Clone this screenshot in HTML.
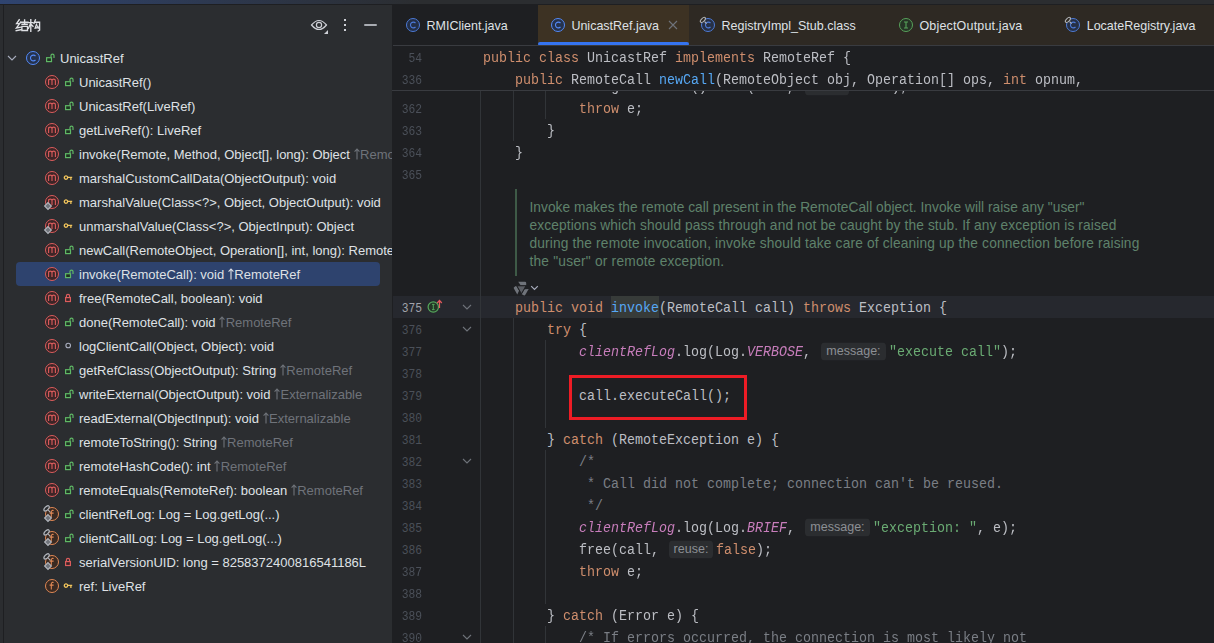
<!DOCTYPE html>
<html><head><meta charset="utf-8"><style>
*{margin:0;padding:0;box-sizing:content-box}
html,body{width:1214px;height:643px;overflow:hidden;background:#1E1F22}
body{position:relative;font-family:"Liberation Sans",sans-serif}
.box{position:absolute}
.ic{position:absolute;overflow:visible}
#title{position:absolute;left:0;top:0;width:1214px;height:4px;background:linear-gradient(90deg,#2F4470 0px,#2B2D30 420px)}
#tline{position:absolute;left:0;top:4px;width:1214px;height:1px;background:#1E1F22}
#panel{position:absolute;left:4px;top:5px;width:388px;height:638px;background:#2B2D30;overflow:hidden}
#lstrip{position:absolute;left:0;top:5px;width:3px;height:638px;background:#2B2D30}
#lline{position:absolute;left:3px;top:5px;width:1px;height:638px;background:#1E1F22}
#pin{position:absolute;left:-4px;top:-5px;width:392px;height:643px}
.ptitle{position:absolute;left:16px;top:17px;font-size:13px;font-weight:bold;color:#DFE1E5}
.tl{position:absolute;height:22px;line-height:22px;font-size:13px;color:#DFE1E5;white-space:pre}
.suf{color:#6F737A}
.tab{position:absolute;top:15px;transform-origin:0 15px;transform:scaleY(1.08);height:22px;line-height:22px;font-size:12.5px;color:#DFE1E5;white-space:pre}
.cl{position:absolute;height:22px;line-height:22px;margin-top:2px;transform-origin:0 14px;transform:scaleY(1.14);font-family:"Liberation Mono",monospace;font-size:13.333px;color:#BCBEC4;white-space:pre}
.k{color:#CF8E6D} .f{color:#56A8F5} .g{color:#6AAB73} .c{color:#7A7E85} .s{color:#C77DBB;font-style:italic}
.lnum{position:absolute;left:392px;width:30px;text-align:right;height:22px;line-height:22px;margin-top:2px;transform-origin:0 14px;transform:scaleY(1.18);font-family:"Liberation Mono",monospace;font-size:11.3px;color:#4B5059}
.hint{display:inline-block;box-sizing:border-box;margin:0 3px 0 2px;height:18px;line-height:18px;vertical-align:0px;transform:scaleY(0.877);background:#2B2D30;border-radius:4px;font-family:"Liberation Sans",sans-serif;font-size:12.5px;color:#8C8F94;text-align:center}
.doc{position:absolute;left:529.5px;height:18px;line-height:18px;font-size:13.75px;color:#5F826B;white-space:pre}
</style></head><body>
<div id="title"></div><div id="tline"></div>
<div id="lstrip"></div><div id="lline"></div>
<div id="panel"><div id="pin">
<svg class="ic" style="left:0;top:0" width="50" height="40" viewBox="0 0 50 40"><g fill="none" stroke="#DFE1E5" stroke-width="1.35" stroke-linecap="square"><path d="M19.2 19.8 L16.6 23.6 L19.8 23.4 M20.6 22.2 L16.4 28 L21 27.2 M16.2 30.6 L21.2 29.6"/><path d="M21.2 22.2 H28 M24.6 19.8 V24.2 M22 24.2 H27.2 M21.9 26.3 H27.5 V30.5 H21.9 Z"/><path d="M28.4 22.6 H33 M30.8 19.7 V31.2 M30.6 23.4 L28.4 28.4 M31.2 24.4 L33 26.2"/><path d="M35.4 19.8 L34 23.4 M34.8 22.2 H39.6 V30.2 L38.2 31 M36.6 24.2 L35.2 28.2 L38.2 27.6 M37.6 26.2 L38.4 28"/></g></svg>
<svg class="ic" style="left:309px;top:17px" width="22" height="18" viewBox="0 0 22 18"><path d="M2.5 8 Q10 -1 17.5 8 Q10 17 2.5 8 Z" fill="none" stroke="#CED0D6" stroke-width="1.2"/><circle cx="10" cy="8" r="2.6" fill="none" stroke="#CED0D6" stroke-width="1.2"/><path d="M19 13 L19 17 L15 17 Z" fill="#CED0D6"/></svg>
<div class="box" style="left:344px;top:19px;width:2px;height:2px;background:#CED0D6"></div>
<div class="box" style="left:344px;top:24px;width:2px;height:2px;background:#CED0D6"></div>
<div class="box" style="left:344px;top:29px;width:2px;height:2px;background:#CED0D6"></div>
<div class="box" style="left:364px;top:24px;width:13px;height:2px;background:#A9ACB2;border-radius:1px"></div>
<svg class="ic" style="left:7px;top:54px" width="10" height="8" viewBox="0 0 10 8"><path d="M1 2 L5 6 L9 2" fill="none" stroke="#A8ADBD" stroke-width="1.1"/></svg>
<svg class="ic" style="left:25px;top:50px" width="16" height="16" viewBox="0 0 16 16"><circle cx="8" cy="8" r="6.5" fill="#25324D" stroke="#548AF7" stroke-width="1"/><path d="M10.5 6 A2.9 2.9 0 1 0 10.5 10" fill="none" stroke="#548AF7" stroke-width="1.1"/></svg>
<svg class="ic" style="left:45px;top:53px" width="10" height="10" viewBox="0 0 10 10"><rect x="1.6" y="4.7" width="4.9" height="3.9" fill="#1F3322" stroke="#5FB865" stroke-width="1.2"/><path d="M6 4.2 V2.6 Q6 1.1 7.5 1.1 Q9 1.1 9 2.6 V5" fill="none" stroke="#5FB865" stroke-width="1.2"/></svg>
<div class="tl" style="left:60px;top:48px">UnicastRef</div>
<div class="box" style="left:16px;top:262px;width:364px;height:24px;background:#2E436E;border-radius:4px"></div>
<svg class="ic" style="left:44px;top:74px" width="16" height="16" viewBox="0 0 16 16"><circle cx="8" cy="8" r="6.5" fill="#3D2527" stroke="#DB5C5C" stroke-width="1"/><path d="M4.6 11 V5.2 M4.6 6.8 Q4.6 5.1 6.3 5.1 Q8 5.1 8 6.8 V11 M8 6.8 Q8 5.1 9.7 5.1 Q11.4 5.1 11.4 6.8 V11" fill="none" stroke="#DB5C5C" stroke-width="1.1"/></svg>
<svg class="ic" style="left:64px;top:77px" width="10" height="10" viewBox="0 0 10 10"><rect x="1.6" y="4.7" width="4.9" height="3.9" fill="#1F3322" stroke="#5FB865" stroke-width="1.2"/><path d="M6 4.2 V2.6 Q6 1.1 7.5 1.1 Q9 1.1 9 2.6 V5" fill="none" stroke="#5FB865" stroke-width="1.2"/></svg>
<div class="tl" style="left:79px;top:72px">UnicastRef()</div>
<svg class="ic" style="left:44px;top:98px" width="16" height="16" viewBox="0 0 16 16"><circle cx="8" cy="8" r="6.5" fill="#3D2527" stroke="#DB5C5C" stroke-width="1"/><path d="M4.6 11 V5.2 M4.6 6.8 Q4.6 5.1 6.3 5.1 Q8 5.1 8 6.8 V11 M8 6.8 Q8 5.1 9.7 5.1 Q11.4 5.1 11.4 6.8 V11" fill="none" stroke="#DB5C5C" stroke-width="1.1"/></svg>
<svg class="ic" style="left:64px;top:101px" width="10" height="10" viewBox="0 0 10 10"><rect x="1.6" y="4.7" width="4.9" height="3.9" fill="#1F3322" stroke="#5FB865" stroke-width="1.2"/><path d="M6 4.2 V2.6 Q6 1.1 7.5 1.1 Q9 1.1 9 2.6 V5" fill="none" stroke="#5FB865" stroke-width="1.2"/></svg>
<div class="tl" style="left:79px;top:96px">UnicastRef(LiveRef)</div>
<svg class="ic" style="left:44px;top:122px" width="16" height="16" viewBox="0 0 16 16"><circle cx="8" cy="8" r="6.5" fill="#3D2527" stroke="#DB5C5C" stroke-width="1"/><path d="M4.6 11 V5.2 M4.6 6.8 Q4.6 5.1 6.3 5.1 Q8 5.1 8 6.8 V11 M8 6.8 Q8 5.1 9.7 5.1 Q11.4 5.1 11.4 6.8 V11" fill="none" stroke="#DB5C5C" stroke-width="1.1"/></svg>
<svg class="ic" style="left:64px;top:125px" width="10" height="10" viewBox="0 0 10 10"><rect x="1.6" y="4.7" width="4.9" height="3.9" fill="#1F3322" stroke="#5FB865" stroke-width="1.2"/><path d="M6 4.2 V2.6 Q6 1.1 7.5 1.1 Q9 1.1 9 2.6 V5" fill="none" stroke="#5FB865" stroke-width="1.2"/></svg>
<div class="tl" style="left:79px;top:120px">getLiveRef(): LiveRef</div>
<svg class="ic" style="left:44px;top:146px" width="16" height="16" viewBox="0 0 16 16"><circle cx="8" cy="8" r="6.5" fill="#3D2527" stroke="#DB5C5C" stroke-width="1"/><path d="M4.6 11 V5.2 M4.6 6.8 Q4.6 5.1 6.3 5.1 Q8 5.1 8 6.8 V11 M8 6.8 Q8 5.1 9.7 5.1 Q11.4 5.1 11.4 6.8 V11" fill="none" stroke="#DB5C5C" stroke-width="1.1"/></svg>
<svg class="ic" style="left:64px;top:149px" width="10" height="10" viewBox="0 0 10 10"><rect x="1.6" y="4.7" width="4.9" height="3.9" fill="#1F3322" stroke="#5FB865" stroke-width="1.2"/><path d="M6 4.2 V2.6 Q6 1.1 7.5 1.1 Q9 1.1 9 2.6 V5" fill="none" stroke="#5FB865" stroke-width="1.2"/></svg>
<div class="tl" style="left:79px;top:144px">invoke(Remote, Method, Object[], long): Object <span class="suf"><svg width="6" height="12" viewBox="0 0 6 12" style="vertical-align:-1px;margin-right:0.5px"><path d="M3 11.5 V1 M0.6 3.6 L3 1 L5.4 3.6" fill="none" stroke="#6F737A" stroke-width="1.1"/></svg>RemoteRef</span></div>
<svg class="ic" style="left:44px;top:170px" width="16" height="16" viewBox="0 0 16 16"><circle cx="8" cy="8" r="6.5" fill="#3D2527" stroke="#DB5C5C" stroke-width="1"/><path d="M4.6 11 V5.2 M4.6 6.8 Q4.6 5.1 6.3 5.1 Q8 5.1 8 6.8 V11 M8 6.8 Q8 5.1 9.7 5.1 Q11.4 5.1 11.4 6.8 V11" fill="none" stroke="#DB5C5C" stroke-width="1.1"/></svg>
<svg class="ic" style="left:64px;top:173px" width="10" height="10" viewBox="0 0 10 10"><circle cx="2.0" cy="4.6" r="1.7" fill="none" stroke="#F2C55C" stroke-width="1.3"/><path d="M3.8 4.4 H8.2 M6.9 4.4 V6.9" fill="none" stroke="#F2C55C" stroke-width="1.3"/></svg>
<div class="tl" style="left:79px;top:168px">marshalCustomCallData(ObjectOutput): void</div>
<svg class="ic" style="left:44px;top:194px" width="16" height="16" viewBox="0 0 16 16"><circle cx="8" cy="8" r="6.5" fill="#3D2527" stroke="#DB5C5C" stroke-width="1"/><path d="M4.6 11 V5.2 M4.6 6.8 Q4.6 5.1 6.3 5.1 Q8 5.1 8 6.8 V11 M8 6.8 Q8 5.1 9.7 5.1 Q11.4 5.1 11.4 6.8 V11" fill="none" stroke="#DB5C5C" stroke-width="1.1"/></svg>
<svg class="ic" style="left:43px;top:201px" width="10" height="10" viewBox="0 0 10 10"><path d="M5 1.6 L8.4 5 L5 8.4 L1.6 5 Z" fill="#6F737A" stroke="#B4B8BF" stroke-width="1.1"/></svg>
<svg class="ic" style="left:64px;top:197px" width="10" height="10" viewBox="0 0 10 10"><circle cx="2.0" cy="4.6" r="1.7" fill="none" stroke="#F2C55C" stroke-width="1.3"/><path d="M3.8 4.4 H8.2 M6.9 4.4 V6.9" fill="none" stroke="#F2C55C" stroke-width="1.3"/></svg>
<div class="tl" style="left:79px;top:192px">marshalValue(Class&lt;?&gt;, Object, ObjectOutput): void</div>
<svg class="ic" style="left:44px;top:218px" width="16" height="16" viewBox="0 0 16 16"><circle cx="8" cy="8" r="6.5" fill="#3D2527" stroke="#DB5C5C" stroke-width="1"/><path d="M4.6 11 V5.2 M4.6 6.8 Q4.6 5.1 6.3 5.1 Q8 5.1 8 6.8 V11 M8 6.8 Q8 5.1 9.7 5.1 Q11.4 5.1 11.4 6.8 V11" fill="none" stroke="#DB5C5C" stroke-width="1.1"/></svg>
<svg class="ic" style="left:43px;top:225px" width="10" height="10" viewBox="0 0 10 10"><path d="M5 1.6 L8.4 5 L5 8.4 L1.6 5 Z" fill="#6F737A" stroke="#B4B8BF" stroke-width="1.1"/></svg>
<svg class="ic" style="left:64px;top:221px" width="10" height="10" viewBox="0 0 10 10"><circle cx="2.0" cy="4.6" r="1.7" fill="none" stroke="#F2C55C" stroke-width="1.3"/><path d="M3.8 4.4 H8.2 M6.9 4.4 V6.9" fill="none" stroke="#F2C55C" stroke-width="1.3"/></svg>
<div class="tl" style="left:79px;top:216px">unmarshalValue(Class&lt;?&gt;, ObjectInput): Object</div>
<svg class="ic" style="left:44px;top:242px" width="16" height="16" viewBox="0 0 16 16"><circle cx="8" cy="8" r="6.5" fill="#3D2527" stroke="#DB5C5C" stroke-width="1"/><path d="M4.6 11 V5.2 M4.6 6.8 Q4.6 5.1 6.3 5.1 Q8 5.1 8 6.8 V11 M8 6.8 Q8 5.1 9.7 5.1 Q11.4 5.1 11.4 6.8 V11" fill="none" stroke="#DB5C5C" stroke-width="1.1"/></svg>
<svg class="ic" style="left:64px;top:245px" width="10" height="10" viewBox="0 0 10 10"><rect x="1.6" y="4.7" width="4.9" height="3.9" fill="#1F3322" stroke="#5FB865" stroke-width="1.2"/><path d="M6 4.2 V2.6 Q6 1.1 7.5 1.1 Q9 1.1 9 2.6 V5" fill="none" stroke="#5FB865" stroke-width="1.2"/></svg>
<div class="tl" style="left:79px;top:240px">newCall(RemoteObject, Operation[], int, long): RemoteCall</div>
<svg class="ic" style="left:44px;top:266px" width="16" height="16" viewBox="0 0 16 16"><circle cx="8" cy="8" r="6.5" fill="#3D2527" stroke="#DB5C5C" stroke-width="1"/><path d="M4.6 11 V5.2 M4.6 6.8 Q4.6 5.1 6.3 5.1 Q8 5.1 8 6.8 V11 M8 6.8 Q8 5.1 9.7 5.1 Q11.4 5.1 11.4 6.8 V11" fill="none" stroke="#DB5C5C" stroke-width="1.1"/></svg>
<svg class="ic" style="left:64px;top:269px" width="10" height="10" viewBox="0 0 10 10"><rect x="1.6" y="4.7" width="4.9" height="3.9" fill="#1F3322" stroke="#5FB865" stroke-width="1.2"/><path d="M6 4.2 V2.6 Q6 1.1 7.5 1.1 Q9 1.1 9 2.6 V5" fill="none" stroke="#5FB865" stroke-width="1.2"/></svg>
<div class="tl" style="left:79px;top:264px">invoke(RemoteCall): void <span class="suf" style="color:#DFE1E5"><svg width="6" height="12" viewBox="0 0 6 12" style="vertical-align:-1px;margin-right:0.5px"><path d="M3 11.5 V1 M0.6 3.6 L3 1 L5.4 3.6" fill="none" stroke="#DFE1E5" stroke-width="1.1"/></svg>RemoteRef</span></div>
<svg class="ic" style="left:44px;top:290px" width="16" height="16" viewBox="0 0 16 16"><circle cx="8" cy="8" r="6.5" fill="#3D2527" stroke="#DB5C5C" stroke-width="1"/><path d="M4.6 11 V5.2 M4.6 6.8 Q4.6 5.1 6.3 5.1 Q8 5.1 8 6.8 V11 M8 6.8 Q8 5.1 9.7 5.1 Q11.4 5.1 11.4 6.8 V11" fill="none" stroke="#DB5C5C" stroke-width="1.1"/></svg>
<svg class="ic" style="left:64px;top:293px" width="10" height="10" viewBox="0 0 10 10"><rect x="1.6" y="4.6" width="4.8" height="3.9" fill="#3A2426" stroke="#DB5C5C" stroke-width="1.2"/><path d="M2.4 4.6 V3.1 Q2.4 1.4 4 1.4 Q5.6 1.4 5.6 3.1 V4.6" fill="none" stroke="#DB5C5C" stroke-width="1.2"/></svg>
<div class="tl" style="left:79px;top:288px">free(RemoteCall, boolean): void</div>
<svg class="ic" style="left:44px;top:314px" width="16" height="16" viewBox="0 0 16 16"><circle cx="8" cy="8" r="6.5" fill="#3D2527" stroke="#DB5C5C" stroke-width="1"/><path d="M4.6 11 V5.2 M4.6 6.8 Q4.6 5.1 6.3 5.1 Q8 5.1 8 6.8 V11 M8 6.8 Q8 5.1 9.7 5.1 Q11.4 5.1 11.4 6.8 V11" fill="none" stroke="#DB5C5C" stroke-width="1.1"/></svg>
<svg class="ic" style="left:64px;top:317px" width="10" height="10" viewBox="0 0 10 10"><rect x="1.6" y="4.7" width="4.9" height="3.9" fill="#1F3322" stroke="#5FB865" stroke-width="1.2"/><path d="M6 4.2 V2.6 Q6 1.1 7.5 1.1 Q9 1.1 9 2.6 V5" fill="none" stroke="#5FB865" stroke-width="1.2"/></svg>
<div class="tl" style="left:79px;top:312px">done(RemoteCall): void <span class="suf"><svg width="6" height="12" viewBox="0 0 6 12" style="vertical-align:-1px;margin-right:0.5px"><path d="M3 11.5 V1 M0.6 3.6 L3 1 L5.4 3.6" fill="none" stroke="#6F737A" stroke-width="1.1"/></svg>RemoteRef</span></div>
<svg class="ic" style="left:44px;top:338px" width="16" height="16" viewBox="0 0 16 16"><circle cx="8" cy="8" r="6.5" fill="#3D2527" stroke="#DB5C5C" stroke-width="1"/><path d="M4.6 11 V5.2 M4.6 6.8 Q4.6 5.1 6.3 5.1 Q8 5.1 8 6.8 V11 M8 6.8 Q8 5.1 9.7 5.1 Q11.4 5.1 11.4 6.8 V11" fill="none" stroke="#DB5C5C" stroke-width="1.1"/></svg>
<svg class="ic" style="left:64px;top:341px" width="10" height="10" viewBox="0 0 10 10"><circle cx="4.2" cy="4.5" r="2.3" fill="none" stroke="#A8ADBD" stroke-width="1.1"/></svg>
<div class="tl" style="left:79px;top:336px">logClientCall(Object, Object): void</div>
<svg class="ic" style="left:44px;top:362px" width="16" height="16" viewBox="0 0 16 16"><circle cx="8" cy="8" r="6.5" fill="#3D2527" stroke="#DB5C5C" stroke-width="1"/><path d="M4.6 11 V5.2 M4.6 6.8 Q4.6 5.1 6.3 5.1 Q8 5.1 8 6.8 V11 M8 6.8 Q8 5.1 9.7 5.1 Q11.4 5.1 11.4 6.8 V11" fill="none" stroke="#DB5C5C" stroke-width="1.1"/></svg>
<svg class="ic" style="left:64px;top:365px" width="10" height="10" viewBox="0 0 10 10"><rect x="1.6" y="4.7" width="4.9" height="3.9" fill="#1F3322" stroke="#5FB865" stroke-width="1.2"/><path d="M6 4.2 V2.6 Q6 1.1 7.5 1.1 Q9 1.1 9 2.6 V5" fill="none" stroke="#5FB865" stroke-width="1.2"/></svg>
<div class="tl" style="left:79px;top:360px">getRefClass(ObjectOutput): String <span class="suf"><svg width="6" height="12" viewBox="0 0 6 12" style="vertical-align:-1px;margin-right:0.5px"><path d="M3 11.5 V1 M0.6 3.6 L3 1 L5.4 3.6" fill="none" stroke="#6F737A" stroke-width="1.1"/></svg>RemoteRef</span></div>
<svg class="ic" style="left:44px;top:386px" width="16" height="16" viewBox="0 0 16 16"><circle cx="8" cy="8" r="6.5" fill="#3D2527" stroke="#DB5C5C" stroke-width="1"/><path d="M4.6 11 V5.2 M4.6 6.8 Q4.6 5.1 6.3 5.1 Q8 5.1 8 6.8 V11 M8 6.8 Q8 5.1 9.7 5.1 Q11.4 5.1 11.4 6.8 V11" fill="none" stroke="#DB5C5C" stroke-width="1.1"/></svg>
<svg class="ic" style="left:64px;top:389px" width="10" height="10" viewBox="0 0 10 10"><rect x="1.6" y="4.7" width="4.9" height="3.9" fill="#1F3322" stroke="#5FB865" stroke-width="1.2"/><path d="M6 4.2 V2.6 Q6 1.1 7.5 1.1 Q9 1.1 9 2.6 V5" fill="none" stroke="#5FB865" stroke-width="1.2"/></svg>
<div class="tl" style="left:79px;top:384px">writeExternal(ObjectOutput): void <span class="suf"><svg width="6" height="12" viewBox="0 0 6 12" style="vertical-align:-1px;margin-right:0.5px"><path d="M3 11.5 V1 M0.6 3.6 L3 1 L5.4 3.6" fill="none" stroke="#6F737A" stroke-width="1.1"/></svg>Externalizable</span></div>
<svg class="ic" style="left:44px;top:410px" width="16" height="16" viewBox="0 0 16 16"><circle cx="8" cy="8" r="6.5" fill="#3D2527" stroke="#DB5C5C" stroke-width="1"/><path d="M4.6 11 V5.2 M4.6 6.8 Q4.6 5.1 6.3 5.1 Q8 5.1 8 6.8 V11 M8 6.8 Q8 5.1 9.7 5.1 Q11.4 5.1 11.4 6.8 V11" fill="none" stroke="#DB5C5C" stroke-width="1.1"/></svg>
<svg class="ic" style="left:64px;top:413px" width="10" height="10" viewBox="0 0 10 10"><rect x="1.6" y="4.7" width="4.9" height="3.9" fill="#1F3322" stroke="#5FB865" stroke-width="1.2"/><path d="M6 4.2 V2.6 Q6 1.1 7.5 1.1 Q9 1.1 9 2.6 V5" fill="none" stroke="#5FB865" stroke-width="1.2"/></svg>
<div class="tl" style="left:79px;top:408px">readExternal(ObjectInput): void <span class="suf"><svg width="6" height="12" viewBox="0 0 6 12" style="vertical-align:-1px;margin-right:0.5px"><path d="M3 11.5 V1 M0.6 3.6 L3 1 L5.4 3.6" fill="none" stroke="#6F737A" stroke-width="1.1"/></svg>Externalizable</span></div>
<svg class="ic" style="left:44px;top:434px" width="16" height="16" viewBox="0 0 16 16"><circle cx="8" cy="8" r="6.5" fill="#3D2527" stroke="#DB5C5C" stroke-width="1"/><path d="M4.6 11 V5.2 M4.6 6.8 Q4.6 5.1 6.3 5.1 Q8 5.1 8 6.8 V11 M8 6.8 Q8 5.1 9.7 5.1 Q11.4 5.1 11.4 6.8 V11" fill="none" stroke="#DB5C5C" stroke-width="1.1"/></svg>
<svg class="ic" style="left:64px;top:437px" width="10" height="10" viewBox="0 0 10 10"><rect x="1.6" y="4.7" width="4.9" height="3.9" fill="#1F3322" stroke="#5FB865" stroke-width="1.2"/><path d="M6 4.2 V2.6 Q6 1.1 7.5 1.1 Q9 1.1 9 2.6 V5" fill="none" stroke="#5FB865" stroke-width="1.2"/></svg>
<div class="tl" style="left:79px;top:432px">remoteToString(): String <span class="suf"><svg width="6" height="12" viewBox="0 0 6 12" style="vertical-align:-1px;margin-right:0.5px"><path d="M3 11.5 V1 M0.6 3.6 L3 1 L5.4 3.6" fill="none" stroke="#6F737A" stroke-width="1.1"/></svg>RemoteRef</span></div>
<svg class="ic" style="left:44px;top:458px" width="16" height="16" viewBox="0 0 16 16"><circle cx="8" cy="8" r="6.5" fill="#3D2527" stroke="#DB5C5C" stroke-width="1"/><path d="M4.6 11 V5.2 M4.6 6.8 Q4.6 5.1 6.3 5.1 Q8 5.1 8 6.8 V11 M8 6.8 Q8 5.1 9.7 5.1 Q11.4 5.1 11.4 6.8 V11" fill="none" stroke="#DB5C5C" stroke-width="1.1"/></svg>
<svg class="ic" style="left:64px;top:461px" width="10" height="10" viewBox="0 0 10 10"><rect x="1.6" y="4.7" width="4.9" height="3.9" fill="#1F3322" stroke="#5FB865" stroke-width="1.2"/><path d="M6 4.2 V2.6 Q6 1.1 7.5 1.1 Q9 1.1 9 2.6 V5" fill="none" stroke="#5FB865" stroke-width="1.2"/></svg>
<div class="tl" style="left:79px;top:456px">remoteHashCode(): int <span class="suf"><svg width="6" height="12" viewBox="0 0 6 12" style="vertical-align:-1px;margin-right:0.5px"><path d="M3 11.5 V1 M0.6 3.6 L3 1 L5.4 3.6" fill="none" stroke="#6F737A" stroke-width="1.1"/></svg>RemoteRef</span></div>
<svg class="ic" style="left:44px;top:482px" width="16" height="16" viewBox="0 0 16 16"><circle cx="8" cy="8" r="6.5" fill="#3D2527" stroke="#DB5C5C" stroke-width="1"/><path d="M4.6 11 V5.2 M4.6 6.8 Q4.6 5.1 6.3 5.1 Q8 5.1 8 6.8 V11 M8 6.8 Q8 5.1 9.7 5.1 Q11.4 5.1 11.4 6.8 V11" fill="none" stroke="#DB5C5C" stroke-width="1.1"/></svg>
<svg class="ic" style="left:64px;top:485px" width="10" height="10" viewBox="0 0 10 10"><rect x="1.6" y="4.7" width="4.9" height="3.9" fill="#1F3322" stroke="#5FB865" stroke-width="1.2"/><path d="M6 4.2 V2.6 Q6 1.1 7.5 1.1 Q9 1.1 9 2.6 V5" fill="none" stroke="#5FB865" stroke-width="1.2"/></svg>
<div class="tl" style="left:79px;top:480px">remoteEquals(RemoteRef): boolean <span class="suf"><svg width="6" height="12" viewBox="0 0 6 12" style="vertical-align:-1px;margin-right:0.5px"><path d="M3 11.5 V1 M0.6 3.6 L3 1 L5.4 3.6" fill="none" stroke="#6F737A" stroke-width="1.1"/></svg>RemoteRef</span></div>
<svg class="ic" style="left:44px;top:506px" width="16" height="16" viewBox="0 0 16 16"><circle cx="8" cy="8" r="6.5" fill="#3A2A22" stroke="#E08855" stroke-width="1"/><path d="M9.6 4.6 Q8.9 4.2 8.2 4.4 Q7.3 4.7 7.3 5.8 V11.6 M5.6 7.1 H9.6" fill="none" stroke="#E08855" stroke-width="1.1"/></svg>
<svg class="ic" style="left:42px;top:504px" width="10" height="10" viewBox="0 0 10 10"><ellipse cx="4.6" cy="4.4" rx="3.3" ry="1.7" transform="rotate(-45 4.6 4.4)" fill="#2B2D30" stroke="#B4B8BF" stroke-width="1.2"/><path d="M6.2 6.2 L8.4 8.4" stroke="#B4B8BF" stroke-width="1.1"/></svg>
<svg class="ic" style="left:43px;top:513px" width="10" height="10" viewBox="0 0 10 10"><path d="M5 1.6 L8.4 5 L5 8.4 L1.6 5 Z" fill="#6F737A" stroke="#B4B8BF" stroke-width="1.1"/></svg>
<svg class="ic" style="left:64px;top:509px" width="10" height="10" viewBox="0 0 10 10"><rect x="1.6" y="4.7" width="4.9" height="3.9" fill="#1F3322" stroke="#5FB865" stroke-width="1.2"/><path d="M6 4.2 V2.6 Q6 1.1 7.5 1.1 Q9 1.1 9 2.6 V5" fill="none" stroke="#5FB865" stroke-width="1.2"/></svg>
<div class="tl" style="left:79px;top:504px">clientRefLog: Log = Log.getLog(...)</div>
<svg class="ic" style="left:44px;top:530px" width="16" height="16" viewBox="0 0 16 16"><circle cx="8" cy="8" r="6.5" fill="#3A2A22" stroke="#E08855" stroke-width="1"/><path d="M9.6 4.6 Q8.9 4.2 8.2 4.4 Q7.3 4.7 7.3 5.8 V11.6 M5.6 7.1 H9.6" fill="none" stroke="#E08855" stroke-width="1.1"/></svg>
<svg class="ic" style="left:42px;top:528px" width="10" height="10" viewBox="0 0 10 10"><ellipse cx="4.6" cy="4.4" rx="3.3" ry="1.7" transform="rotate(-45 4.6 4.4)" fill="#2B2D30" stroke="#B4B8BF" stroke-width="1.2"/><path d="M6.2 6.2 L8.4 8.4" stroke="#B4B8BF" stroke-width="1.1"/></svg>
<svg class="ic" style="left:43px;top:537px" width="10" height="10" viewBox="0 0 10 10"><path d="M5 1.6 L8.4 5 L5 8.4 L1.6 5 Z" fill="#6F737A" stroke="#B4B8BF" stroke-width="1.1"/></svg>
<svg class="ic" style="left:64px;top:533px" width="10" height="10" viewBox="0 0 10 10"><rect x="1.6" y="4.7" width="4.9" height="3.9" fill="#1F3322" stroke="#5FB865" stroke-width="1.2"/><path d="M6 4.2 V2.6 Q6 1.1 7.5 1.1 Q9 1.1 9 2.6 V5" fill="none" stroke="#5FB865" stroke-width="1.2"/></svg>
<div class="tl" style="left:79px;top:528px">clientCallLog: Log = Log.getLog(...)</div>
<svg class="ic" style="left:44px;top:554px" width="16" height="16" viewBox="0 0 16 16"><circle cx="8" cy="8" r="6.5" fill="#3A2A22" stroke="#E08855" stroke-width="1"/><path d="M9.6 4.6 Q8.9 4.2 8.2 4.4 Q7.3 4.7 7.3 5.8 V11.6 M5.6 7.1 H9.6" fill="none" stroke="#E08855" stroke-width="1.1"/></svg>
<svg class="ic" style="left:42px;top:552px" width="10" height="10" viewBox="0 0 10 10"><ellipse cx="4.6" cy="4.4" rx="3.3" ry="1.7" transform="rotate(-45 4.6 4.4)" fill="#2B2D30" stroke="#B4B8BF" stroke-width="1.2"/><path d="M6.2 6.2 L8.4 8.4" stroke="#B4B8BF" stroke-width="1.1"/></svg>
<svg class="ic" style="left:43px;top:561px" width="10" height="10" viewBox="0 0 10 10"><path d="M5 1.6 L8.4 5 L5 8.4 L1.6 5 Z" fill="#6F737A" stroke="#B4B8BF" stroke-width="1.1"/></svg>
<svg class="ic" style="left:64px;top:557px" width="10" height="10" viewBox="0 0 10 10"><rect x="1.6" y="4.6" width="4.8" height="3.9" fill="#3A2426" stroke="#DB5C5C" stroke-width="1.2"/><path d="M2.4 4.6 V3.1 Q2.4 1.4 4 1.4 Q5.6 1.4 5.6 3.1 V4.6" fill="none" stroke="#DB5C5C" stroke-width="1.2"/></svg>
<div class="tl" style="left:79px;top:552px">serialVersionUID: long = 8258372400816541186L</div>
<svg class="ic" style="left:44px;top:578px" width="16" height="16" viewBox="0 0 16 16"><circle cx="8" cy="8" r="6.5" fill="#3A2A22" stroke="#E08855" stroke-width="1"/><path d="M9.6 4.6 Q8.9 4.2 8.2 4.4 Q7.3 4.7 7.3 5.8 V11.6 M5.6 7.1 H9.6" fill="none" stroke="#E08855" stroke-width="1.1"/></svg>
<svg class="ic" style="left:64px;top:581px" width="10" height="10" viewBox="0 0 10 10"><circle cx="2.0" cy="4.6" r="1.7" fill="none" stroke="#F2C55C" stroke-width="1.3"/><path d="M3.8 4.4 H8.2 M6.9 4.4 V6.9" fill="none" stroke="#F2C55C" stroke-width="1.3"/></svg>
<div class="tl" style="left:79px;top:576px">ref: LiveRef</div>
</div></div>
<div class="box" style="left:538px;top:5px;width:151px;height:40px;background:#3D3223"></div>
<div class="box" style="left:689px;top:5px;width:525px;height:40px;background:#2E2923"></div>
<div class="box" style="left:538px;top:42px;width:151px;height:4px;background:#3574F0;border-radius:2px"></div>
<div class="box" style="left:393px;top:45px;width:821px;height:1px;background:#393B40"></div>
<div class="box" style="left:0;top:0;opacity:0.85">
<svg class="ic" style="left:405px;top:17px" width="16" height="16" viewBox="0 0 16 16"><circle cx="8" cy="8" r="6.5" fill="#25324D" stroke="#548AF7" stroke-width="1"/><path d="M10.5 6 A2.9 2.9 0 1 0 10.5 10" fill="none" stroke="#548AF7" stroke-width="1.1"/></svg>
</div>
<div class="tab" style="left:426.5px;letter-spacing:0px">RMIClient.java</div>
<div class="box" style="left:0;top:0;opacity:1">
<svg class="ic" style="left:550px;top:17px" width="16" height="16" viewBox="0 0 16 16"><circle cx="8" cy="8" r="6.5" fill="#25324D" stroke="#548AF7" stroke-width="1"/><path d="M10.5 6 A2.9 2.9 0 1 0 10.5 10" fill="none" stroke="#548AF7" stroke-width="1.1"/></svg>
</div>
<div class="tab" style="left:571.4px;letter-spacing:0px">UnicastRef.java</div>
<div class="box" style="left:0;top:0;opacity:0.85">
<svg class="ic" style="left:700px;top:17px" width="16" height="16" viewBox="0 0 16 16"><circle cx="8" cy="8" r="6.5" fill="#25324D" stroke="#548AF7" stroke-width="1"/><path d="M10.5 6 A2.9 2.9 0 1 0 10.5 10" fill="none" stroke="#548AF7" stroke-width="1.1"/></svg>
<svg class="ic" style="left:698px;top:15px" width="10" height="10" viewBox="0 0 10 10"><ellipse cx="4.9" cy="4.9" rx="3.2" ry="1.6" transform="rotate(-45 4.9 4.9)" fill="#2E2923" stroke="#C8CBD0" stroke-width="1.1"/><path d="M6.6 6.6 L8.6 8.6" stroke="#C8CBD0" stroke-width="1.1"/></svg>
</div>
<div class="tab" style="left:721.6px;letter-spacing:0px">RegistryImpl_Stub.class</div>
<div class="box" style="left:0;top:0;opacity:0.85">
<svg class="ic" style="left:898px;top:17px" width="16" height="16" viewBox="0 0 16 16"><circle cx="8" cy="8" r="6.5" fill="#253627" stroke="#5FB865" stroke-width="1"/><path d="M6 5 H10 M6 11 H10 M8 5 V11" fill="none" stroke="#5FB865" stroke-width="1.1"/></svg>
</div>
<div class="tab" style="left:919.4px;letter-spacing:0.18px">ObjectOutput.java</div>
<div class="box" style="left:0;top:0;opacity:0.85">
<svg class="ic" style="left:1065px;top:17px" width="16" height="16" viewBox="0 0 16 16"><circle cx="8" cy="8" r="6.5" fill="#25324D" stroke="#548AF7" stroke-width="1"/><path d="M10.5 6 A2.9 2.9 0 1 0 10.5 10" fill="none" stroke="#548AF7" stroke-width="1.1"/></svg>
<svg class="ic" style="left:1063px;top:15px" width="10" height="10" viewBox="0 0 10 10"><ellipse cx="4.9" cy="4.9" rx="3.2" ry="1.6" transform="rotate(-45 4.9 4.9)" fill="#2E2923" stroke="#C8CBD0" stroke-width="1.1"/><path d="M6.6 6.6 L8.6 8.6" stroke="#C8CBD0" stroke-width="1.1"/></svg>
</div>
<div class="tab" style="left:1086.7px;letter-spacing:0px">LocateRegistry.java</div>
<svg class="ic" style="left:668px;top:20px" width="10" height="10" viewBox="0 0 10 10"><path d="M1 1 L9 9 M9 1 L1 9" stroke="#6F737A" stroke-width="1.1"/></svg>
<div class="box" style="left:393px;top:296px;width:821px;height:22px;background:#26282E"></div>
<div class="box" style="left:611px;top:296px;width:48px;height:22px;background:#373B39"></div>
<div class="box" style="left:480px;top:91px;width:1px;height:552px;background:#313438"></div>
<div class="box" style="left:513px;top:91px;width:1px;height:50px;background:#313438"></div>
<div class="box" style="left:545px;top:91px;width:1px;height:28px;background:#313438"></div>
<div class="box" style="left:513px;top:318px;width:1px;height:325px;background:#313438"></div>
<div class="box" style="left:545px;top:340px;width:1px;height:88px;background:#313438"></div>
<div class="box" style="left:545px;top:450px;width:1px;height:154px;background:#313438"></div>
<div class="box" style="left:545px;top:626px;width:1px;height:17px;background:#313438"></div>
<div class="cl" style="top:75px;left:579px">ref.getChannel().free(conn, <span class="hint" style="width:44px">reuse:</span><span class="k">false</span>);</div>
<div class="cl" style="top:97px;left:579px"><span class="k">throw</span> e;</div>
<div class="lnum" style="top:97px;color:#4B5059">362</div>
<div class="cl" style="top:119px;left:547px">}</div>
<div class="lnum" style="top:119px;color:#4B5059">363</div>
<div class="cl" style="top:141px;left:515px">}</div>
<div class="lnum" style="top:141px;color:#4B5059">364</div>
<div class="lnum" style="top:163px;color:#4B5059">365</div>
<div class="cl" style="top:296px;left:515px"><span class="k">public</span> <span class="k">void</span> <span class="f">invoke</span>(RemoteCall call) <span class="k">throws</span> Exception {</div>
<div class="lnum" style="top:296px;color:#A1A3AB">375</div>
<div class="cl" style="top:318px;left:547px"><span class="k">try</span> {</div>
<div class="lnum" style="top:318px;color:#4B5059">376</div>
<div class="cl" style="top:340px;left:579px"><span class="s">clientRefLog</span>.log(Log.<span class="s">VERBOSE</span>, <span class="hint" style="width:65px">message:</span><span class="g">&quot;execute call&quot;</span>);</div>
<div class="lnum" style="top:340px;color:#4B5059">377</div>
<div class="lnum" style="top:362px;color:#4B5059">378</div>
<div class="cl" style="top:384px;left:579px">call.executeCall();</div>
<div class="lnum" style="top:384px;color:#4B5059">379</div>
<div class="lnum" style="top:406px;color:#4B5059">380</div>
<div class="cl" style="top:428px;left:547px">} <span class="k">catch</span> (RemoteException e) {</div>
<div class="lnum" style="top:428px;color:#4B5059">381</div>
<div class="cl" style="top:450px;left:579px"><span class="c">/*</span></div>
<div class="lnum" style="top:450px;color:#4B5059">382</div>
<div class="cl" style="top:472px;left:579px"><span class="c"> * Call did not complete; connection can&#x27;t be reused.</span></div>
<div class="lnum" style="top:472px;color:#4B5059">383</div>
<div class="cl" style="top:494px;left:579px"><span class="c"> */</span></div>
<div class="lnum" style="top:494px;color:#4B5059">384</div>
<div class="cl" style="top:516px;left:579px"><span class="s">clientRefLog</span>.log(Log.<span class="s">BRIEF</span>, <span class="hint" style="width:65px">message:</span><span class="g">&quot;exception: &quot;</span>, e);</div>
<div class="lnum" style="top:516px;color:#4B5059">385</div>
<div class="cl" style="top:538px;left:579px">free(call, <span class="hint" style="width:44px">reuse:</span><span class="k">false</span>);</div>
<div class="lnum" style="top:538px;color:#4B5059">386</div>
<div class="cl" style="top:560px;left:579px"><span class="k">throw</span> e;</div>
<div class="lnum" style="top:560px;color:#4B5059">387</div>
<div class="lnum" style="top:582px;color:#4B5059">388</div>
<div class="cl" style="top:604px;left:547px">} <span class="k">catch</span> (Error e) {</div>
<div class="lnum" style="top:604px;color:#4B5059">389</div>
<div class="cl" style="top:626px;left:579px"><span class="c">/* If errors occurred, the connection is most likely not</span></div>
<div class="lnum" style="top:626px;color:#4B5059">390</div>
<svg class="ic" style="left:462px;top:303px" width="10" height="8" viewBox="0 0 10 8"><path d="M1 2 L5 6 L9 2" fill="none" stroke="#6F737A" stroke-width="1.1"/></svg>
<svg class="ic" style="left:462px;top:325px" width="10" height="8" viewBox="0 0 10 8"><path d="M1 2 L5 6 L9 2" fill="none" stroke="#6F737A" stroke-width="1.1"/></svg>
<svg class="ic" style="left:462px;top:457px" width="10" height="8" viewBox="0 0 10 8"><path d="M1 2 L5 6 L9 2" fill="none" stroke="#6F737A" stroke-width="1.1"/></svg>
<svg class="ic" style="left:462px;top:633px" width="10" height="8" viewBox="0 0 10 8"><path d="M1 2 L5 6 L9 2" fill="none" stroke="#6F737A" stroke-width="1.1"/></svg>
<svg class="ic" style="left:426px;top:299px" width="18" height="16" viewBox="0 0 18 16"><circle cx="7.3" cy="8" r="5.2" fill="#253627" stroke="#55A65C" stroke-width="1.2"/><path d="M6 5.4 H8.6 M6 10.6 H8.6 M7.3 5.4 V10.6" fill="none" stroke="#55A65C" stroke-width="1"/><path d="M13.5 9 V1.6 M11.2 4 L13.5 1.4 L15.8 4" fill="none" stroke="#E65A5C" stroke-width="1.2"/></svg>
<div class="box" style="left:515px;top:189px;width:2px;height:87px;background:#3E5A47"></div>
<div class="doc" style="top:198.5px;letter-spacing:0.02px">Invoke makes the remote call present in the RemoteCall object. Invoke will raise any &quot;user&quot;</div>
<div class="doc" style="top:216.5px;letter-spacing:0.113px">exceptions which should pass through and not be caught by the stub. If any exception is raised</div>
<div class="doc" style="top:234.5px;letter-spacing:0.148px">during the remote invocation, invoke should take care of cleaning up the connection before raising</div>
<div class="doc" style="top:252.5px;letter-spacing:0.2px">the &quot;user&quot; or remote exception.</div>
<svg class="ic" style="left:508px;top:278px" width="36" height="20" viewBox="0 0 36 20"><g transform="translate(13.4,10.4)"><path id="bl" d="M-3.2 -6.6 L3.6 -6.6 Q4.8 -6.6 4.8 -5.4 L4.8 -3.2 L-0.8 -3.2 Z" fill="#6F737A"/><use href="#bl" transform="rotate(120)"/><use href="#bl" transform="rotate(240)"/><path d="M-4.6 -2.6 L4.6 -2.6 L0 5.4 Z" fill="#5A5D63" stroke="#1E1F22" stroke-width="1"/></g><path d="M23.2 8.2 L26.5 11.5 L29.8 8.2" fill="none" stroke="#A8ADBD" stroke-width="1.2"/></svg>
<div class="box" style="left:392px;top:46px;width:822px;height:44px;background:#1E1F22"></div>
<div class="box" style="left:392px;top:90px;width:822px;height:1px;background:#393B40"></div>
<div class="lnum" style="top:46px">54</div>
<div class="lnum" style="top:68px">336</div>
<div class="cl" style="top:46px;left:483px"><span class="k">public</span> <span class="k">class</span> UnicastRef <span class="k">implements</span> RemoteRef {</div>
<div class="cl" style="top:68px;left:515px"><span class="k">public</span> RemoteCall <span class="f">newCall</span>(RemoteObject obj, Operation[] ops, <span class="k">int</span> opnum,</div>
<div class="box" style="left:569px;top:375px;width:172px;height:39px;border:3px solid #EE1C25"></div>
</body></html>
